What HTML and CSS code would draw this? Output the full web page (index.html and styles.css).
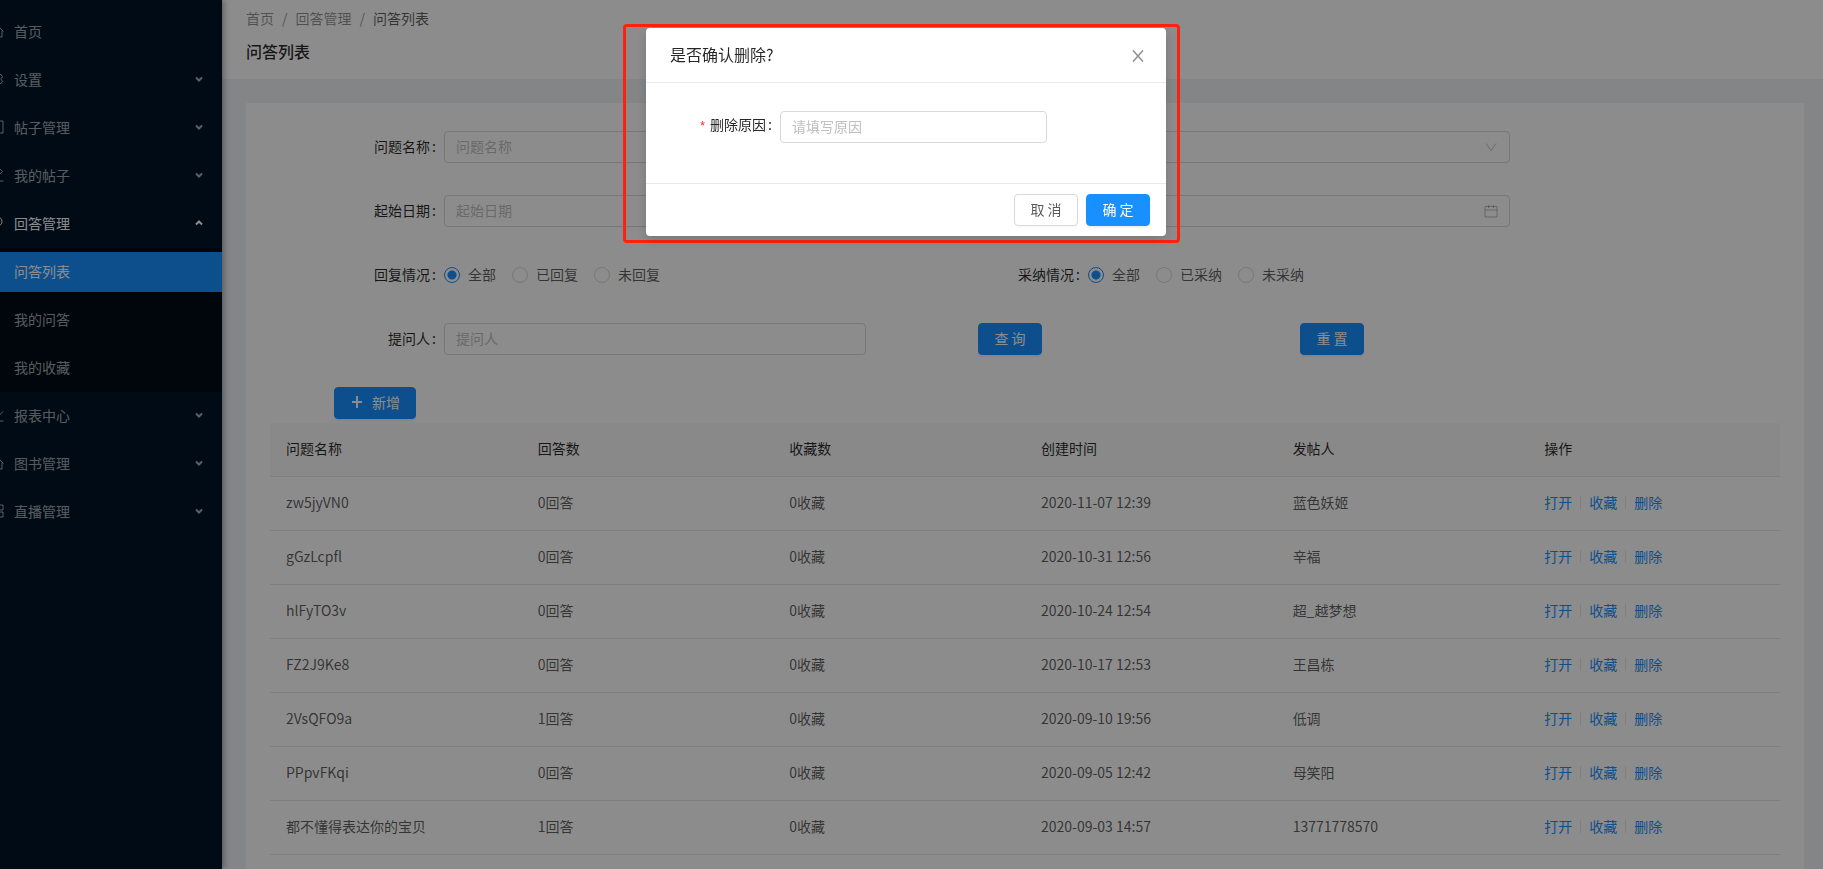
FILE: index.html
```html
<!DOCTYPE html>
<html lang="zh-CN">
<head>
    <meta charset="UTF-8">
    <meta name="viewport" content="width=device-width, initial-scale=1.0">
    <title>问答列表</title>
    <link rel="stylesheet" href="styles.css">
</head>
<body>
    <div class="layout">
        <nav class="sider">
            <a class="menu-item" href="#">
                <svg class="icon" viewBox="0 0 14 14"><path d="M0.5 7.5 7 1l6.500 6.500M2 6.500V13h10V6.500M5.500 13V9h3v4"/></svg>
                <span>首页</span>
            </a>
            <a class="menu-item" href="#">
                <svg class="icon" viewBox="0 0 14 14"><path d="M5.500 1h3l.6 1.800 1.900-.4 1.500 2.500L11.200 6.300v1.400l1.300 1.400-1.500 2.500-1.900-.4-.6 1.800h-3l-.6-1.800-1.900.4L1.500 9.100l1.300-1.400V6.300L1.500 4.900 3 2.400l1.900.4z"/><circle cx="7" cy="7" r="2"/></svg>
                <span>设置</span>
                <svg class="arrow" viewBox="0 0 8 6"><path d="M1 1.500l3 3 3-3"/></svg>
            </a>
            <a class="menu-item" href="#">
                <svg class="icon" viewBox="0 0 14 14"><path d="M1 1h12v12H1zM4 4.500h6M4 7h6M4 9.500h4"/></svg>
                <span>帖子管理</span>
                <svg class="arrow" viewBox="0 0 8 6"><path d="M1 1.500l3 3 3-3"/></svg>
            </a>
            <a class="menu-item" href="#">
                <svg class="icon" viewBox="0 0 14 14"><path d="M1 13h12.500M3 10.500l.5-3L10 1l2.500 2.500L6 10z"/></svg>
                <span>我的帖子</span>
                <svg class="arrow" viewBox="0 0 8 6"><path d="M1 1.500l3 3 3-3"/></svg>
            </a>
            <a class="menu-item open" href="#">
                <svg class="icon" viewBox="0 0 14 14"><circle cx="7.500" cy="5.500" r="4.500"/><path d="M5.500 12.500h4"/></svg>
                <span>回答管理</span>
                <svg class="arrow" viewBox="0 0 8 6"><path d="M1 4.500l3-3 3 3"/></svg>
            </a>
            <div class="submenu">
                <a class="menu-item selected" href="#">问答列表</a>
                <a class="menu-item" href="#">我的问答</a>
                <a class="menu-item" href="#">我的收藏</a>
            </div>
            <a class="menu-item" href="#">
                <svg class="icon" viewBox="0 0 14 14"><path d="M1 1v12h12.500M3 9.500l3-3 2 2L13 3.500"/></svg>
                <span>报表中心</span>
                <svg class="arrow" viewBox="0 0 8 6"><path d="M1 1.500l3 3 3-3"/></svg>
            </a>
            <a class="menu-item" href="#">
                <svg class="icon" viewBox="0 0 14 14"><path d="M0.5 7.500 7 1l6.500 6.500M2 6.500V13h10V6.500M5.500 13V9h3v4"/></svg>
                <span>图书管理</span>
                <svg class="arrow" viewBox="0 0 8 6"><path d="M1 1.500l3 3 3-3"/></svg>
            </a>
            <a class="menu-item" href="#">
                <svg class="icon" viewBox="0 0 14 14"><path d="M1 1h5v5H1zM8 1h5v5H8zM1 8h5v5H1zM8 8h5v5H8z"/></svg>
                <span>直播管理</span>
                <svg class="arrow" viewBox="0 0 8 6"><path d="M1 1.500l3 3 3-3"/></svg>
            </a>
        </nav>

        <main class="main">
            <header class="page-header">
                <div class="breadcrumb">
                    <a href="#">首页</a><span class="sep">/</span><a href="#">回答管理</a><span class="sep">/</span><span class="current">问答列表</span>
                </div>
                <h1>问答列表</h1>
            </header>

            <section class="card">
                <form class="search-form">
                    <div class="form-item">
                        <label class="label" for="questionName">问题名称</label>
                        <div class="control"><input class="input" type="text" id="questionName" placeholder="问题名称"></div>
                    </div>
                    <div class="form-item no-label">
                        <div class="control">
                            <select class="input" aria-label="问题类型"><option value=""></option></select>
                            <svg class="suffix" viewBox="0 0 14 14"><path d="M2 3.500l5 7 5-7"/></svg>
                        </div>
                    </div>
                    <div class="form-item">
                        <label class="label" for="startDate">起始日期</label>
                        <div class="control"><input class="input" type="text" id="startDate" placeholder="起始日期"></div>
                    </div>
                    <div class="form-item no-label">
                        <div class="control">
                            <input class="input" type="text" aria-label="结束日期">
                            <svg class="suffix" viewBox="0 0 14 14"><path d="M1 2.500h12v10.500H1zM1 6h12M4.500 1v3M9.500 1v3"/></svg>
                        </div>
                    </div>
                    <div class="form-item">
                        <span class="label" id="replyLabel">回复情况</span>
                        <div class="control radio-group" role="radiogroup" aria-labelledby="replyLabel">
                            <label><input type="radio" name="reply" checked>全部</label>
                            <label><input type="radio" name="reply">已回复</label>
                            <label><input type="radio" name="reply">未回复</label>
                        </div>
                    </div>
                    <div class="form-item">
                        <span class="label" id="adoptLabel">采纳情况</span>
                        <div class="control radio-group" role="radiogroup" aria-labelledby="adoptLabel">
                            <label><input type="radio" name="adopt" checked>全部</label>
                            <label><input type="radio" name="adopt">已采纳</label>
                            <label><input type="radio" name="adopt">未采纳</label>
                        </div>
                    </div>
                    <div class="form-item">
                        <label class="label" for="asker">提问人</label>
                        <div class="control"><input class="input" type="text" id="asker" placeholder="提问人"></div>
                    </div>
                    <div class="form-buttons">
                        <div><button class="btn primary" type="button">查 询</button></div>
                        <div><button class="btn primary" type="reset">重 置</button></div>
                    </div>
                    <div class="form-buttons">
                        <button class="btn primary add" type="button">
                            <svg class="plus" viewBox="0 0 14 14"><path d="M7 1v12M2 7h10"/></svg>
                            <span>新增</span>
                        </button>
                    </div>
                </form>

                <table class="table">
                    <thead>
                        <tr><th>问题名称</th><th>回答数</th><th>收藏数</th><th>创建时间</th><th>发帖人</th><th>操作</th></tr>
                    </thead>
                    <tbody>
                        <tr><td>zw5jyVN0</td><td>0回答</td><td>0收藏</td><td>2020-11-07 12:39</td><td>蓝色妖姬</td><td class="actions"><a href="#">打开</a><a href="#">收藏</a><a href="#">删除</a></td></tr>
                        <tr><td>gGzLcpfl</td><td>0回答</td><td>0收藏</td><td>2020-10-31 12:56</td><td>辛福</td><td class="actions"><a href="#">打开</a><a href="#">收藏</a><a href="#">删除</a></td></tr>
                        <tr><td>hlFyTO3v</td><td>0回答</td><td>0收藏</td><td>2020-10-24 12:54</td><td>超_越梦想</td><td class="actions"><a href="#">打开</a><a href="#">收藏</a><a href="#">删除</a></td></tr>
                        <tr><td>FZ2J9Ke8</td><td>0回答</td><td>0收藏</td><td>2020-10-17 12:53</td><td>王昌栋</td><td class="actions"><a href="#">打开</a><a href="#">收藏</a><a href="#">删除</a></td></tr>
                        <tr><td>2VsQFO9a</td><td>1回答</td><td>0收藏</td><td>2020-09-10 19:56</td><td>低调</td><td class="actions"><a href="#">打开</a><a href="#">收藏</a><a href="#">删除</a></td></tr>
                        <tr><td>PPpvFKqi</td><td>0回答</td><td>0收藏</td><td>2020-09-05 12:42</td><td>母笑阳</td><td class="actions"><a href="#">打开</a><a href="#">收藏</a><a href="#">删除</a></td></tr>
                        <tr><td>都不懂得表达你的宝贝</td><td>1回答</td><td>0收藏</td><td>2020-09-03 14:57</td><td>13771778570</td><td class="actions"><a href="#">打开</a><a href="#">收藏</a><a href="#">删除</a></td></tr>
                    </tbody>
                </table>
            </section>
        </main>
    </div>

    <div class="mask">
        <div class="highlight">
            <div class="modal" role="dialog" aria-labelledby="modalTitle">
                <div class="modal-header">
                    <h2 id="modalTitle">是否确认删除?</h2>
                    <button class="close" type="button" aria-label="关闭"><svg viewBox="0 0 12 12"><path d="M1 0.5l10 11M11 0.5l-10 11"/></svg></button>
                </div>
                <div class="modal-body">
                    <div class="form-item">
                        <label class="label required" for="reason">删除原因</label>
                        <div class="control"><input class="input" type="text" id="reason" placeholder="请填写原因"></div>
                    </div>
                </div>
                <div class="modal-footer">
                    <button class="btn" type="button">取 消</button>
                    <button class="btn primary" type="button">确 定</button>
                </div>
            </div>
        </div>
    </div>
</body>
</html>
```
FILE: styles.css
```css
* {
    box-sizing: border-box;
}
body {
    margin: 0;
    font-family: "Noto Sans CJK SC", sans-serif;
    font-size: 14px;
    line-height: 21px;
    color: rgba(0, 0, 0, 0.65);
    background: #f0f2f5;
    overflow: hidden;
}
a {
    color: #1890ff;
    text-decoration: none;
}
svg {
    fill: none;
    stroke: currentColor;
}
.layout {
    display: flex;
    height: 100vh;
}

/* sidebar */
.sider {
    flex: none;
    width: 256px;
    margin-left: -34px;
    padding-top: 8px;
    background: #001529;
    box-shadow: 2px 0 6px rgba(0, 21, 41, 0.35);
    z-index: 1;
}
.menu-item {
    display: flex;
    align-items: center;
    height: 40px;
    margin: 4px 0 8px;
    padding: 0 19px 2px 24px;
    color: rgba(255, 255, 255, 0.65);
}
.menu-item.open,
.menu-item.selected {
    color: #fff;
}
.menu-item.open {
    margin-bottom: 4px;
}
.menu-item.selected {
    background: #1890ff;
}
.icon {
    width: 14px;
    height: 14px;
    margin-right: 10px;
}
.arrow {
    width: 8px;
    height: 6px;
    margin-left: auto;
    stroke-width: 2;
}
.submenu {
    display: flow-root;
    margin-bottom: 4px;
    background: #000c17;
}
.submenu .menu-item {
    padding-left: 48px;
}
.submenu .menu-item:last-child {
    margin-bottom: 4px;
}

/* header */
.main {
    flex: 1;
    display: flex;
    flex-direction: column;
}
.page-header {
    height: 79px;
    padding: 8px 24px 0;
    background: #fff;
}
.breadcrumb a,
.sep {
    color: rgba(0, 0, 0, 0.45);
}
.sep {
    margin: 0 8px;
}
.page-header h1 {
    margin: 8px 0 0;
    font-size: 16px;
    line-height: 28px;
    font-weight: 500;
    color: rgba(0, 0, 0, 0.85);
}
.card {
    flex: 1;
    margin: 24px 19px 0 24px;
    padding: 24px 24px 0;
    background: #fff;
}

/* form */
.search-form {
    display: grid;
    grid-template-columns: 1fr 1fr;
    row-gap: 24px;
    padding: 0 158px 0 64px;
}
.form-item {
    display: flex;
    align-items: center;
    height: 40px;
}
.form-item.no-label {
    padding-left: 110px;
}
.label {
    width: 110px;
    padding-bottom: 2px;
    text-align: right;
    color: rgba(0, 0, 0, 0.85);
}
.label::after {
    content: ":";
    margin: 0 8px 0 2px;
}
.label.required::before {
    content: "*";
    margin-right: 4px;
    font-family: "Liberation Mono", monospace;
    font-size: 12px;
    color: #f5222d;
}
.control {
    position: relative;
    flex: 1;
    margin-right: 112px;
}
.input {
    display: block;
    width: 100%;
    height: 32px;
    padding: 3px 11px 5px;
    border: 1px solid #d9d9d9;
    border-radius: 4px;
    background: #fff;
    font: inherit;
    color: inherit;
    appearance: none;
    outline: none;
}
.input::placeholder {
    color: #bfbfbf;
}
.suffix {
    position: absolute;
    top: 9px;
    right: 12px;
    width: 14px;
    height: 14px;
    color: rgba(0, 0, 0, 0.25);
    pointer-events: none;
}
.radio-group {
    display: flex;
    gap: 16px;
}
.radio-group label {
    display: flex;
    align-items: center;
    gap: 8px;
    padding-bottom: 2px;
}
.radio-group input {
    width: 16px;
    height: 16px;
    margin: 2px 0 0;
    border: 1px solid #d9d9d9;
    border-radius: 50%;
    background: #fff;
    appearance: none;
}
.radio-group input:checked {
    border-color: #1890ff;
    background: radial-gradient(circle, #1890ff 4px, #fff 5px);
}
.form-buttons {
    display: grid;
    grid-template-columns: 1fr 1fr;
    align-items: center;
    height: 40px;
}
.btn {
    min-width: 64px;
    height: 32px;
    padding: 0 15px 2px;
    border: 1px solid #d9d9d9;
    border-radius: 4px;
    background: #fff;
    font: inherit;
    color: rgba(0, 0, 0, 0.65);
    box-shadow: 0 2px 0 rgba(0, 0, 0, 0.02);
    cursor: pointer;
}
.btn.primary {
    border-color: #1890ff;
    background: #1890ff;
    color: #fff;
    box-shadow: 0 2px 0 rgba(0, 0, 0, 0.05);
}
.btn.add {
    display: flex;
    align-items: center;
    justify-self: start;
    gap: 8px;
}
.plus {
    width: 14px;
    height: 14px;
    stroke-width: 2;
}

/* table */
.table {
    width: 100%;
    table-layout: fixed;
    border-collapse: separate;
    border-spacing: 0;
}
.table th,
.table td {
    height: 54px;
    padding: 0 16px 2px;
    border-bottom: 1px solid #e8e8e8;
    text-align: left;
}
.table th {
    background: #fafafa;
    font-weight: 400;
    color: rgba(0, 0, 0, 0.85);
}
.actions a + a::before {
    content: "";
    display: inline-block;
    width: 1px;
    height: 13px;
    margin: 0 8px;
    background: #e8e8e8;
    vertical-align: -1px;
}

/* delete dialog */
.mask {
    position: fixed;
    inset: 0;
    z-index: 10;
    display: flex;
    justify-content: center;
    align-items: flex-start;
    padding: 24px 20px 0 0;
    background: rgba(0, 0, 0, 0.45);
}
.highlight {
    padding: 1px 11px 4px 20px;
    border: 3px solid #ff2010;
    border-radius: 4px;
}
.modal {
    width: 520px;
    background: #fff;
    border-radius: 4px;
    box-shadow: 0 4px 12px rgba(0, 0, 0, 0.15);
}
.modal-header {
    display: flex;
    justify-content: space-between;
    align-items: center;
    height: 55px;
    padding: 0 22px 0 24px;
    border-bottom: 1px solid #e8e8e8;
}
.modal-header h2 {
    margin: 0;
    padding-bottom: 2px;
    font-size: 16px;
    font-weight: 400;
    color: rgba(0, 0, 0, 0.85);
}
.close {
    display: flex;
    padding: 2px 0 0;
    border: 0;
    background: none;
    color: rgba(0, 0, 0, 0.45);
    cursor: pointer;
}
.close svg {
    width: 12px;
    height: 12px;
    stroke-width: 1.5;
}
.modal-body {
    padding: 24px 24px 36px;
}
.modal-body .control {
    margin-right: 95px;
}
.modal-footer {
    display: flex;
    justify-content: flex-end;
    gap: 8px;
    padding: 10px 16px;
    border-top: 1px solid #e8e8e8;
}
```
